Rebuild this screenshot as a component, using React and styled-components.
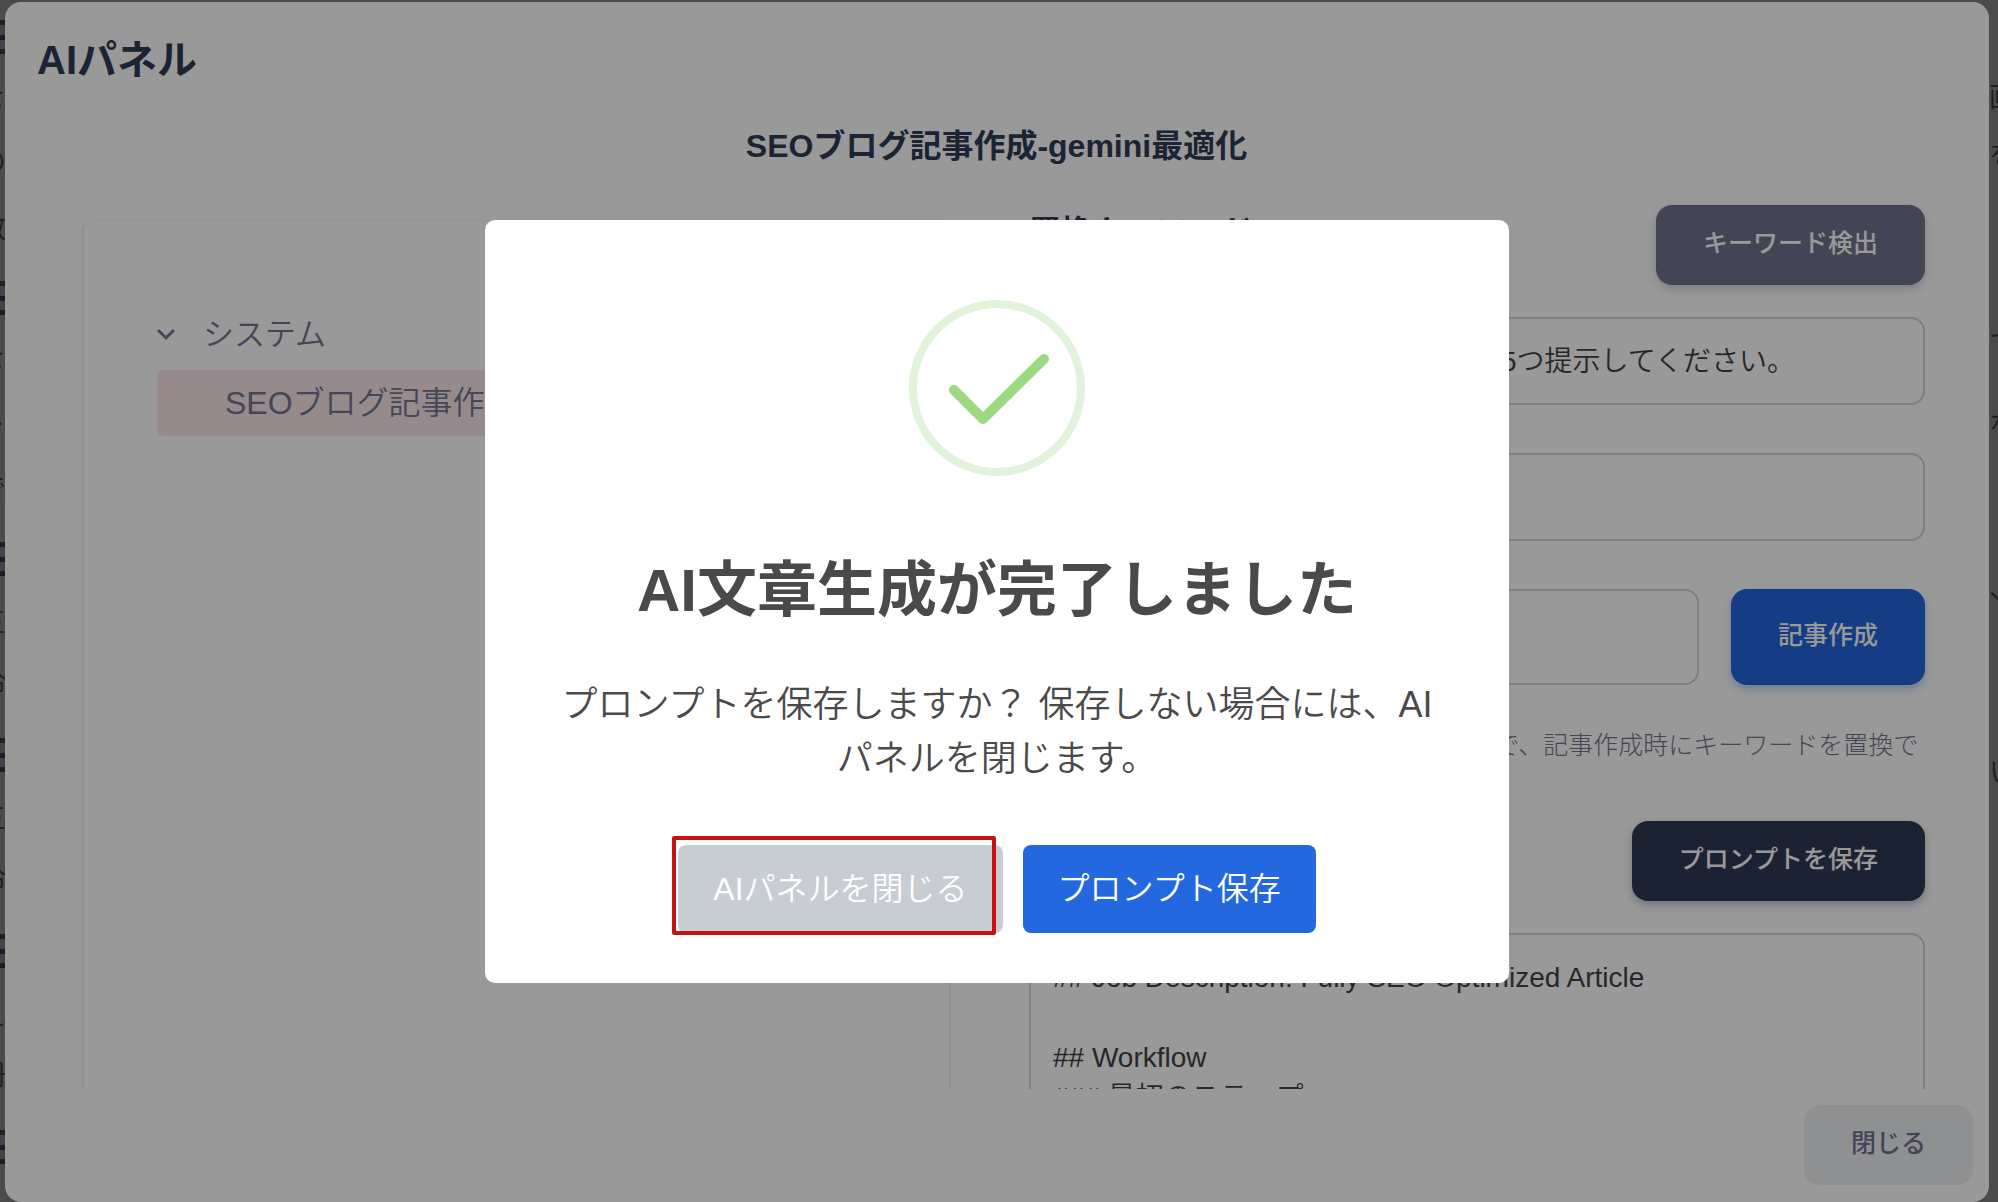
import React, { Component } from "react";
import styled, { createGlobalStyle } from "styled-components";

const GlobalStyle = createGlobalStyle`
  * {
    box-sizing: border-box;
  }
  body {
    margin: 0;
    overflow: hidden;
    font-family: "Liberation Sans", "Noto Sans CJK JP", sans-serif;
    font-weight: 350;
  }
  button, input, textarea {
    font-family: inherit;
    font-weight: inherit;
    margin: 0;
  }
`;

const Page = styled.div`
  position: relative;
  height: 100vh;
  overflow: hidden;
  background-color: #7d7d7d;
`;

// Outline list behind the panel
const Outline = styled.ul`
  position: absolute;
  top: 0;
  left: 0;
  margin: 0;
  padding: 20px 0 0;
  list-style: none;
`;
const OutlineItem = styled.li`
  height: ${(props) => (props.$tall ? 261 : 196)}px;
`;
const Handle = styled.div`
  width: 12px;
  height: 34px;
  border-top: 5px solid #33333d;
  border-bottom: 5px solid #33333d;
  background: linear-gradient(#70707a 10px, #33333d 10px, #33333d 15px, #70707a 15px);
`;
const OutlineText = styled.div`
  margin: ${(props) => (props.$tall ? 10 : 18)}px 0 0 -22px;
  font-size: 28px;
  line-height: ${(props) => (props.$tall ? 66 : 60)}px;
  color: #33333d;
`;
const Article = styled.div`
  position: absolute;
  top: 0;
  right: -19px;
  width: 28px;
  font-size: 28px;
  line-height: 56px;
  color: #33333d;
`;
const ArticleLine = styled.div`
  margin-top: ${(props) => props.$gap}px;
`;

const Panel = styled.section`
  position: relative;
  display: flex;
  flex-direction: column;
  height: calc(100vh - 2px);
  margin: 2px 9px 0 5px;
  background-color: #fff;
  border-radius: 16px;
`;
const PanelTitle = styled.h1`
  margin: 0;
  padding: 28px 32px 0;
  font-size: 40px;
  line-height: 60px;
  font-weight: 700;
  color: #303d58;
`;
const PanelBody = styled.div`
  flex: 1;
  min-height: 0;
  overflow: hidden;
  padding: 32px 64px 0 79px;
`;
const PromptTitle = styled.h2`
  margin: 0 0 35px;
  padding-right: 16px;
  font-size: 32px;
  line-height: 48px;
  font-weight: 700;
  text-align: center;
  color: #303d58;
`;
const Columns = styled.div`
  display: grid;
  grid-template-columns: 865fr 896fr;
  gap: 80px;
`;

const Tree = styled.div`
  margin-top: 16px;
  padding: 83px 73px;
  min-height: 1000px;
  border-radius: 8px;
  box-shadow: 0 2px 4px rgba(0, 0, 0, 0.2);
  color: #74768f;
  font-size: 32px;
`;
const TreeGroup = styled.div`
  display: flex;
  align-items: center;
  gap: 28px;
  height: 60px;
  margin-bottom: 6px;
  font-size: 31px;
`;
const TreeLabel = styled.span`
  padding-bottom: 6px;
`;
const TreeItem = styled.div`
  display: flex;
  align-items: center;
  height: 66px;
  padding-left: 68px;
  border-radius: 6px;
  background-color: #fce7ec;
  white-space: nowrap;
  overflow: hidden;
`;

const Form = styled.form`
  display: flex;
  flex-direction: column;
`;
const Row = styled.div`
  display: flex;
  justify-content: space-between;
  gap: 32px;
  margin-top: ${(props) => props.$top || 0}px;
`;
const Label = styled.label`
  font-size: 32px;
  line-height: 54px;
  font-weight: 700;
  color: #303d58;
`;
const Button = styled.button`
  height: ${(props) => (props.$tall ? 96 : 80)}px;
  padding: 0 47px 8px;
  border: none;
  border-radius: 16px;
  font-size: 25px;
  font-weight: 500;
  white-space: nowrap;
  color: ${(props) => props.$color || "#fff"};
  background-color: ${(props) => props.$bg};
  box-shadow: ${(props) => (props.$flat ? "none" : `0 4px 8px ${props.$bg}50`)};
`;
const Input = styled.input`
  flex: 1;
  width: 100%;
  min-width: 0;
  min-height: 88px;
  margin-top: ${(props) => props.$top || 0}px;
  padding: 0 22px 4px;
  border: 2px solid #d2d2d2;
  border-radius: 14px;
  font-size: 28px;
  color: #424245;
  background-color: transparent;
`;
const Help = styled.p`
  margin: 38px 0 0;
  font-size: 25px;
  line-height: 44px;
  font-weight: 300;
  color: #74768a;
`;
const PromptText = styled.textarea`
  height: 600px;
  margin-top: 32px;
  padding: 23px 22px;
  border: 2px solid #d2d2d2;
  border-radius: 14px;
  font-size: 28px;
  line-height: 40px;
  color: #424245;
  background-color: transparent;
  resize: none;
  overflow: hidden;
`;
const PanelFooter = styled.footer`
  display: flex;
  justify-content: flex-end;
  padding: 16px 16px 17px;
`;

const Backdrop = styled.div`
  position: fixed;
  inset: 0;
  display: flex;
  align-items: center;
  justify-content: center;
  padding: 1px 4px 0 0;
  background-color: rgba(0, 0, 0, 0.4);
`;
const Dialog = styled.div`
  display: flex;
  flex-direction: column;
  align-items: center;
  width: 1024px;
  max-width: 100%;
  padding: 80px 64px 50px;
  border-radius: 10px;
  background-color: #fff;
  color: #4a4a4a;
`;
const DialogTitle = styled.h2`
  margin: 70px 0 0;
  font-size: 60px;
  line-height: 90px;
  font-weight: 700;
`;
const DialogText = styled.p`
  margin: 42px 0 0;
  font-size: 36px;
  line-height: 54px;
  text-align: center;
`;
const DialogActions = styled.div`
  display: flex;
  gap: 20px;
  margin-top: 59px;
`;
const DialogButton = styled.button`
  height: 88px;
  padding: 0 35px 6px;
  border: none;
  border-radius: 8px;
  font-size: 32px;
  color: #fff;
  background-color: ${(props) => props.$bg};
`;
const Marked = styled.div`
  position: relative;
  &::after {
    content: "";
    position: absolute;
    inset: -9px 7px -2px -6px;
    border: 4px solid #c81212;
    border-radius: 2px;
    pointer-events: none;
  }
`;

const promptText = `## Job Description: Fully SEO Optimized Article

## Workflow
### 最初のステップ`;

const outlineItems = [
  { text: "をの数", tall: true },
  { text: "をトで", tall: true },
  { text: "三冷" },
  { text: "三冷" },
  { text: "え冊" },
  { text: "え冊" },
];

const articleLines = [
  { text: "画", gap: 70 },
  { text: "を", gap: 2 },
  { text: "て", gap: 133 },
  { text: "な", gap: 24 },
  { text: "、", gap: 108 },
  { text: "い", gap: 128 },
];

// Component
class AiPanel extends Component {
  state = {
    keyword: "この記事の魅力的なタイトルの案を5つ提示してください。",
    replace: "",
    extra: "",
    prompt: promptText,
  };

  onChange = (e) => {
    this.setState({ [e.target.name]: e.target.value });
  };

  renderOutline() {
    return (
      <Outline>
        {outlineItems.map((item, i) => (
          <OutlineItem key={i} $tall={item.tall}>
            <Handle />
            <OutlineText $tall={item.tall}>
              {item.text.split("").map((char) => (
                <div key={char}>{char}</div>
              ))}
            </OutlineText>
          </OutlineItem>
        ))}
      </Outline>
    );
  }

  renderArticle() {
    return (
      <Article>
        {articleLines.map((line) => (
          <ArticleLine key={line.text} $gap={line.gap}>{line.text}</ArticleLine>
        ))}
      </Article>
    );
  }

  renderForm() {
    const { keyword, replace, extra, prompt } = this.state;
    return (
      <Form onSubmit={(e) => e.preventDefault()}>
        <Row>
          <Label htmlFor="keyword">置換キーワード</Label>
          <Button type="button" $bg="#70738c">キーワード検出</Button>
        </Row>
        <Input id="keyword" name="keyword" $top={32} value={keyword} onChange={this.onChange} />
        <Input name="replace" aria-label="置換" $top={48} value={replace} onChange={this.onChange} />
        <Row $top={48}>
          <Input name="extra" aria-label="追加" value={extra} onChange={this.onChange} />
          <Button type="submit" $tall $bg="#2366df">記事作成</Button>
        </Row>
        <Help>
          プロンプトに{"{}"}で囲んだ文字を入れることで、記事作成時にキーワードを置換できます。
        </Help>
        <Row $top={10}>
          <Label htmlFor="prompt">プロンプト</Label>
          <Button type="button" $bg="#2e3b55">プロンプトを保存</Button>
        </Row>
        <PromptText id="prompt" name="prompt" value={prompt} onChange={this.onChange} />
      </Form>
    );
  }

  render() {
    return (
      <Page>
        <GlobalStyle />
        {this.renderOutline()}
        {this.renderArticle()}
        <Panel>
          <PanelTitle>AIパネル</PanelTitle>
          <PanelBody>
            <PromptTitle>SEOブログ記事作成-gemini最適化</PromptTitle>
            <Columns>
              <Tree>
                <TreeGroup>
                  <svg width="18" height="18" viewBox="0 0 18 18" fill="none" stroke="currentColor" strokeWidth="3">
                    <path d="M1 5 9 13 17 5" />
                  </svg>
                  <TreeLabel>システム</TreeLabel>
                </TreeGroup>
                <TreeItem>
                  <TreeLabel>SEOブログ記事作成-gemini最適化</TreeLabel>
                </TreeItem>
              </Tree>
              {this.renderForm()}
            </Columns>
          </PanelBody>
          <PanelFooter>
            <Button type="button" $flat $bg="#eef0f4" $color="#70738c">閉じる</Button>
          </PanelFooter>
        </Panel>
        <Backdrop>
          <Dialog role="dialog" aria-labelledby="dialog-title">
            <svg width="176" height="176" viewBox="0 0 176 176" fill="none">
              <circle cx="88" cy="88" r="84" stroke="#e1f3da" strokeWidth="8" />
              <path d="M45 90 74 119 135 59" stroke="#9dd980" strokeWidth="10" strokeLinecap="round" strokeLinejoin="round" />
            </svg>
            <DialogTitle id="dialog-title">AI文章生成が完了しました</DialogTitle>
            <DialogText>
              プロンプトを保存しますか？ 保存しない場合には、AIパネルを閉じます。
            </DialogText>
            <DialogActions>
              <Marked>
                <DialogButton type="button" $bg="#c8ccd3">AIパネルを閉じる</DialogButton>
              </Marked>
              <DialogButton type="button" $bg="#2468e0">プロンプト保存</DialogButton>
            </DialogActions>
          </Dialog>
        </Backdrop>
      </Page>
    );
  }
}

export default AiPanel;
